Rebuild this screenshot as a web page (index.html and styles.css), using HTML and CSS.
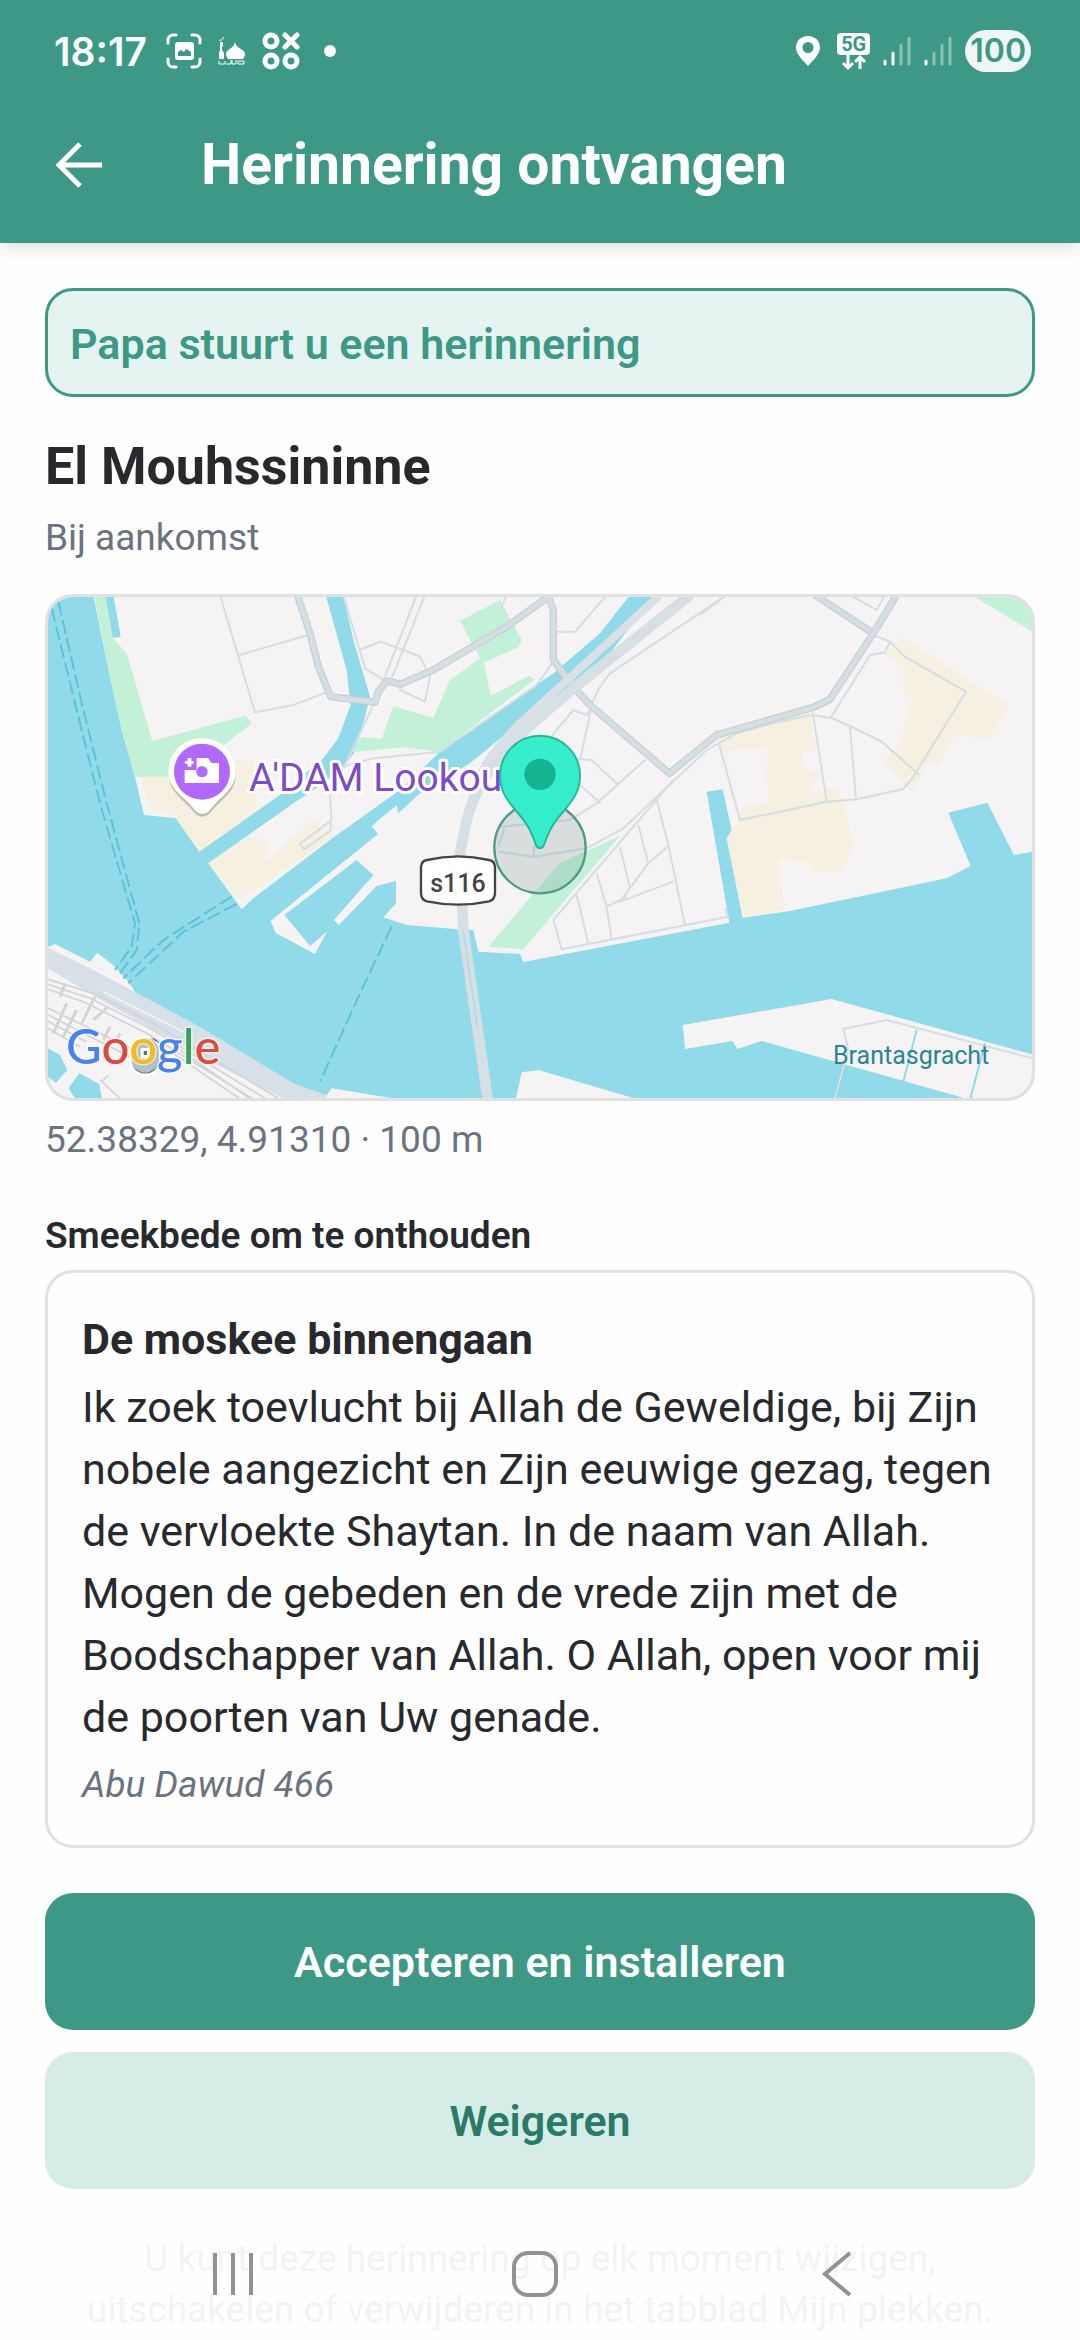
FILE: index.html
```
<!DOCTYPE html>
<html lang="nl">
<head>
  <meta charset="UTF-8" />
  <meta name="viewport" content="width=device-width, initial-scale=1.0"/>
  <title>Herinnering ontvangen</title>
  <link rel="stylesheet" href="styles.css">
</head>
<body>

<header class="app-header">
  <div class="status-bar">
    <div class="status-left">
      <span class="clock">18:17</span>
      <svg width="36" height="36" viewBox="0 0 36 36" aria-hidden="true">
        <path d="M2 10V7a5 5 0 0 1 5-5h3M26 2h3a5 5 0 0 1 5 5v3M34 26v3a5 5 0 0 1-5 5h-3M10 34H7a5 5 0 0 1-5-5v-3" fill="none" stroke="#fff" stroke-width="3" stroke-linecap="round"/>
        <rect x="9" y="9" width="19" height="18" rx="3" fill="#fff"/>
        <path d="M12 23v-4l3-2 3 2 2-3 2 1 3 2v4z" fill="#3d9985"/>
      </svg>
      <svg width="28" height="28" viewBox="0 0 28 28" aria-hidden="true">
        <path d="M8 17c0-5 8-5 9-12 1 7 10 7 10 12 0 2-1 3-2 5H10c-1-2-2-3-2-5zM2 5h3v4l-1 1v3l2 3v6H1v-6l1-3z" fill="#fff"/>
        <path d="M5 0c1 2-2 4-4 3" fill="none" stroke="#fff" stroke-width="1"/>
        <path d="M1 24v3h6v-3M8 27h5v-4M14 23v4h4v-4M20 27v-3h6v3z" fill="none" stroke="#fff" stroke-width="1"/>
      </svg>
      <svg width="38" height="40" viewBox="0 0 38 40" aria-hidden="true">
        <g fill="none" stroke="#fff" stroke-width="5" stroke-linecap="round">
          <circle cx="9" cy="10" r="6"/><circle cx="9" cy="30" r="6"/><circle cx="29" cy="30" r="6"/>
          <path d="M23 4l12 12M35 4L23 16"/>
        </g>
      </svg>
      <span class="more-dot"></span>
    </div>
    <div class="status-right">
      <svg width="24" height="32" viewBox="0 0 24 32" aria-hidden="true">
        <path fill-rule="evenodd" d="M12 1C5 1 0 6 0 12.500 0 20 8 26 12 31c4-5 12-11 12-18.500C24 6 19 1 12 1zm0 6a5 5 0 1 1 0 11 5 5 0 0 1 0-11z" fill="#fff"/>
      </svg>
      <span class="network">
        <span class="network-type">5G</span>
        <svg width="26" height="15" viewBox="0 0 26 15" aria-hidden="true">
          <path d="M7 0v13M2 8l5 5 5-5M19 14V2M14 7l5-5 5 5" fill="none" stroke="#fff" stroke-width="3"/>
        </svg>
      </span>
      <svg width="28" height="30" viewBox="0 0 28 30" aria-hidden="true">
        <g stroke="#fff" stroke-width="3" stroke-linecap="round">
          <path d="M2 25v3M10 17v11"/><path d="M18 9v19M26 2v26" opacity=".4"/>
        </g>
      </svg>
      <svg width="28" height="30" viewBox="0 0 28 30" aria-hidden="true">
        <g stroke="#fff" stroke-width="3" stroke-linecap="round">
          <path d="M2 25v3"/><path d="M10 17v11M18 9v19M26 2v26" opacity=".4"/>
        </g>
      </svg>
      <span class="battery">100</span>
    </div>
  </div>
  <div class="title-bar">
    <button class="back" type="button" aria-label="Terug">
      <svg width="46" height="46" viewBox="0 0 46 46" aria-hidden="true">
        <path d="M24 2L3 23l21 21M3 23h43" fill="none" stroke="#fff" stroke-width="5"/>
      </svg>
    </button>
    <h1>Herinnering ontvangen</h1>
  </div>
</header>

<main>
  <p class="banner">Papa stuurt u een herinnering</p>

  <h2 class="place">El Mouhssininne</h2>
  <p class="muted">Bij aankomst</p>

  <div class="map">
    <svg viewBox="0 0 984 501" preserveAspectRatio="xMidYMid slice" role="img" aria-label="Kaart">
      <g transform="translate(-8 -7) scale(.33333)">
        <rect width="3000" height="1560" fill="#90daea"/>

        <!-- land -->
        <g fill="#f5f3f4">
          <path d="M160 15L185 140 210 260 245 420 285 560 312 675 408 685 478 785 720 615 850 505 895 445 932 345 920 240 857 15z"/>
          <path d="M910 15L940 150 990 320 965 420 945 485 910 530 850 580 760 640 505 820 605 958 640 925 870 750 1080 600 1200 485 1540 250 1680 130 1770 15z"/>
          <path d="M1840 15L1790 85 1710 190 1610 280 1500 370 1400 430 1290 520 1140 610 1075 670 1070 645 995 708 1014 732 692 992 706 1028 825 1092 862 1024 810 1068 733 975 950 810 1000 856 882 990 896 1006 1010 888 1068 873 1068 940 1030 982 1100 1005 1245 1017 1300 1020 1315 1085 1440 1092 1450 1116 2068 998 2000 605 2048 598 2075 720 2060 745 2108 983 2250 963 2720 865 2792 828 2725 668 2842 638 2922 795 2990 783V15z"/>
          <path d="M1928 1305L2375 1227 2990 1397V1540L2775 1525 2165 1353 2092 1377 2077 1353 1935 1377z"/>
          <path d="M1425 1540L1445 1447 1495 1440 1800 1530z"/>
          <path d="M15 1075L45 1062 150 1115 172 1088 225 1130 265 1175 290 1212 475 1310 728 1470 725 1485 860 1515 875 1495 1090 1530 15 1540z"/>
        </g>
        <path d="M195 15L218 145 242 140 220 15z" fill="#90daea"/>
        <path d="M15 1370L60 1395 82 1440 48 1478 15 1455zM118 1450L178 1482 188 1540H115L85 1495z" fill="#90daea"/>

        <!-- built-up areas -->
        <g fill="#f5f0df">
          <path d="M285 562H390L560 505 640 515 650 660 478 785 408 685 325 650 310 565z"/>
          <path d="M505 820L620 740 690 755 670 820 820 690 880 740 630 910 605 930 575 915z"/>
          <path d="M2030 425L2310 340 2325 480 2285 485V530L2338 545 2305 605 2390 595 2420 670 2440 780 2400 845H2320L2300 815 2215 805 2232 960 2108 983 2062 745 2095 690 2100 652 2185 640 2180 470 2045 485z"/>
          <path d="M2585 140L2905 345 2850 445 2745 435 2695 525 2665 510 2615 605 2530 515 2580 465 2615 325 2590 300V230L2535 195z"/>
        </g>

        <!-- parks -->
        <g fill="#c3f1d8">
          <path d="M162 15H195L218 145 260 190 337 453 615 377 636 400 555 462 500 560H285L245 420 210 260z"/>
          <path d="M935 487L965 440 1025 447 1060 348 1180 384 1228 272 1320 205 1260 92 1380 30 1445 150 1435 172 1332 218 1352 318 1465 258 1485 268 1200 485 1090 472z"/>
          <path d="M1345 1070L1558 820 1740 738 1450 1078z"/>
          <path d="M2795 15L2985 130V15z"/>
        </g>

        <!-- small streets -->
        <g fill="none" stroke="#d5dfe3" stroke-width="6">
          <path d="M540 15L645 367 760 345 860 307M598 195L805 135M910 15L975 235 1035 272M962 178L1022 155 1140 200 1170 260 1155 335 1080 300 1085 270M1130 15L1035 260M1155 15L1055 265M1005 335L870 620 875 690 780 762 792 778 872 722V690M910 530L1000 505 1200 485 1490 285 1540 215M1400 15L1380 60M1700 15L1605 125H1550"/>
          <path d="M1440 560L1550 420 1600 360 1640 375 1655 350 1620 510M2060 15L1710 250 1680 290 1650 350M1815 510L1670 640 1590 690 1380 710M1600 505L1655 510 1735 585M1620 585L1682 640M1395 710L1375 770M1375 785L1480 800 1640 775 1750 715 2000 480 2090 430 2200 400 2310 375 2372 383 2430 408 2525 455 2638 555M1480 800L1490 720"/>
          <path d="M1850 630L1885 765 1935 1005M1795 705L1825 820 1740 935 1900 875M1740 770L1770 895M1825 820L1885 768M1670 850L1700 950 1715 1050M1700 950L1760 920M1610 915L1645 1060M1540 990L1565 1078 2065 980 2055 955M1540 990L1900 570"/>
          <path d="M2035 455L2100 690 2220 665 2360 635 2450 628 2590 597 2620 560 2778 305 2595 200 2550 155 2500 135M2318 365L2360 635M2430 408L2448 628M2372 383L2490 195 2535 187 2550 155M1980 75L2060 15M2430 15L2510 60 2535 15"/>
          <path d="M2380 1540L2425 1380 2410 1317 2540 1290 2990 1408"/>
        </g>
        <path d="M2630 1320L2590 1475M2835 1360L2790 1530" fill="none" stroke="#90daea" stroke-width="6"/>

        <!-- main roads -->
        <g fill="none" stroke-linejoin="round">
          <path d="M772 15L810 130 835 230 872 320 1005 337 1015 305 1040 272 1080 283 1180 240 1400 110 1525 20 1540 60V210L1600 290 1650 345 1888 550 2030 435 2320 352 2370 328 2500 130 2570 15M2325 15L2500 130" stroke="#c5d0d6" stroke-width="22"/>
          <path d="M772 15L810 130 835 230 872 320 1005 337 1015 305 1040 272 1080 283 1180 240 1400 110 1525 20 1540 60V210L1600 290 1650 345 1888 550 2030 435 2320 352 2370 328 2500 130 2570 15M2325 15L2500 130" stroke="#d5dfe3" stroke-width="15"/>
        </g>
        <path d="M1950 15L1600 295 1460 415C1370 495 1300 600 1278 700L1260 790 1270 1020 1345 1540" fill="none" stroke="#d6e0e4" stroke-width="32"/>
        <path d="M1860 15L1560 290 1440 400C1350 490 1330 530 1295 620" fill="none" stroke="#d9e1e6" stroke-width="24"/>
        <path d="M1270 1020L1312 1310" fill="none" stroke="#a9d7e2" stroke-width="4"/>

        <!-- railway -->
        <path d="M15 1070L150 1135 480 1310 760 1480 860 1515 860 1540H760L560 1440 200 1240 15 1130z" fill="#d6e0e6"/>
        <g fill="none" stroke="#d2d4d8" stroke-width="5">
          <path d="M15 1165L160 1210 340 1300 740 1540M15 1180L150 1225 330 1315 700 1540M15 1195L130 1235 320 1330 660 1540M15 1250L180 1330 300 1390M15 1270L160 1345 290 1410M15 1290L140 1355M15 1310L120 1370M400 1390L620 1540M420 1380L650 1540M180 1470L240 1525M185 1475L205 1455"/>
          <path d="M75 1180L60 1220M165 1220L125 1300M205 1250L160 1290M80 1240L40 1330M110 1260L70 1340M210 1310L190 1350M240 1330L225 1360" stroke-width="9"/>
          <path d="M190 1205L400 1310M230 1225L430 1325" stroke="#eef1f3" stroke-width="6"/>
        </g>

        <!-- ferry lines -->
        <g fill="none" stroke="#5dc3d9" stroke-width="6" stroke-dasharray="42 14">
          <path d="M35 55L110 360 180 640 285 1000 275 1070 225 1140M55 35L130 360 200 640 298 1000 290 1080 240 1150M575 920L370 1050 250 1165M590 942L430 1025 265 1180M1055 1010L960 1210 840 1475"/>
        </g>
      </g>

      <text class="map-place" x="201" y="194">A'DAM Lookou</text>
      <text class="map-water" x="785" y="467">Brantasgracht</text>

      <g transform="translate(-8 -7) scale(.33333)">
        <path d="M387 555a100 100 0 1 1 200 0c0 50-40 70-72 108-16 22-40 22-56 0-32-38-72-58-72-108z" fill="#444" opacity=".3"/>
        <path d="M385 545a101 101 0 1 1 202 0c0 50-40 70-72 108-16 25-40 25-56 0-32-38-74-58-74-108z" fill="#fff"/>
        <circle cx="486" cy="545" r="84" fill="#b069fb"/>
        <path d="M434 540H470V504H504L514 519H537V579H434zM443 504H454V513H461V521H454V530H443V521H435V513H443z" fill="#fff"/>
        <circle cx="486" cy="545" r="17" fill="#b069fb"/>

        <path d="M1143 830q2-18 18-20 93-22 186 0 16 2 18 20v82q-2 18-18 22-93 20-186 0-16-4-18-22z" fill="#fff" stroke="#444" stroke-width="7"/>

        <circle cx="1500" cy="773" r="137" fill="#5f8a82" fill-opacity=".2" stroke="#4c9c89" stroke-width="7"/>
        <path d="M1500 437c-66 0-120 54-120 120 0 60 36 88 70 132 20 26 30 52 38 76 5 12 19 12 24 0 8-24 18-50 38-76 34-44 70-72 70-132 0-66-54-120-120-120z" fill="#36edcc" stroke="#28b899" stroke-width="6"/>
        <circle cx="1500" cy="553" r="47" fill="#14b392"/>

        <rect x="268" y="1338" width="96" height="122" rx="44" fill="#fff"/>
        <rect x="275" y="1345" width="82" height="106" rx="38" fill="#b3bfc5"/>
        <path d="M280 1430q36 36 70 0-12 20-34 20t-36-20zM330 1342q20 4 30 20z" fill="#4c6472"/>
        <rect x="302" y="1374" width="28" height="30" fill="#fff"/>
        <rect x="311" y="1383" width="10" height="12" fill="#5c6f79"/>
      </g>

      <text class="map-road" x="410" y="295">s116</text>
      <text class="map-logo" x="18" y="467"><tspan class="g-blue">G</tspan><tspan class="g-red">o</tspan><tspan class="g-yellow">o</tspan><tspan class="g-blue">g</tspan><tspan class="g-green">l</tspan><tspan class="g-red">e</tspan></text>
    </svg>
  </div>
  <p class="muted">52.38329, 4.91310 · 100 m</p>

  <h3 class="section-title">Smeekbede om te onthouden</h3>
  <article class="card">
    <h4>De moskee binnengaan</h4>
    <p class="dua">Ik zoek toevlucht bij Allah de Geweldige, bij Zijn nobele aangezicht en Zijn eeuwige gezag, tegen de vervloekte Shaytan. In de naam van Allah. Mogen de gebeden en de vrede zijn met de Boodschapper van Allah. O Allah, open voor mij de poorten van Uw genade.</p>
    <p class="source">Abu Dawud 466</p>
  </article>

  <div class="actions">
    <button class="button primary" type="button">Accepteren en installeren</button>
    <button class="button secondary" type="button">Weigeren</button>
  </div>

  <p class="note">U kunt deze herinnering op elk moment wijzigen, uitschakelen of verwijderen in het tabblad Mijn plekken.</p>
</main>

<nav class="nav-bar">
  <button type="button" aria-label="Recente apps">
    <svg width="46" height="46" viewBox="0 0 46 46" aria-hidden="true">
      <path d="M5 2v42M23 2v42M41 2v42" fill="none" stroke="#929292" stroke-width="4"/>
    </svg>
  </button>
  <button type="button" aria-label="Startscherm">
    <svg width="46" height="46" viewBox="0 0 46 46" aria-hidden="true">
      <rect x="2" y="2" width="42" height="42" rx="14" fill="none" stroke="#929292" stroke-width="4"/>
    </svg>
  </button>
  <button type="button" aria-label="Vorige">
    <svg width="46" height="46" viewBox="0 0 46 46" aria-hidden="true">
      <path d="M36 2L11 23l25 21" fill="none" stroke="#929292" stroke-width="4"/>
    </svg>
  </button>
</nav>

</body>
</html>
```
FILE: styles.css
```
* {
  box-sizing: border-box;
}
body {
  font-family: Roboto, sans-serif;
  background: #fefefe;
  margin: 0;
  color: #27292d;
}
h1, h2, h3, h4, p {
  margin: 0;
}
svg {
  display: block;
}
button {
  font-family: inherit;
  border: none;
  background: none;
  padding: 0;
  cursor: pointer;
}

/* header */
.app-header {
  background: #3d9985;
  color: #fff;
  box-shadow: 0 2px 16px rgba(0,0,0,0.16);
}
.status-bar {
  display: flex;
  justify-content: space-between;
  align-items: center;
  height: 102px;
  padding: 0 49px 0 54px;
}
.status-left, .status-right {
  display: flex;
  align-items: center;
}
.status-left {
  gap: 16px;
}
.status-right {
  gap: 13px;
}
.clock {
  font-family: Inter, sans-serif;
  font-size: 39px;
  font-weight: 600;
  margin-right: 3px;
}
.more-dot {
  width: 12px;
  height: 12px;
  margin-left: 8px;
  border-radius: 50%;
  background: #fff;
}
.network {
  display: flex;
  flex-direction: column;
  align-items: center;
  margin-left: 4px;
}
.network-type {
  padding: 0 4px;
  border-radius: 4px;
  background: #fff;
  color: #3d9985;
  font-size: 20px;
  line-height: 22px;
  font-weight: 700;
}
.battery {
  padding: 0 5px;
  border-radius: 21px;
  background: #eef7f5;
  color: #3d9985;
  font-family: Inter, sans-serif;
  font-size: 32px;
  line-height: 42px;
  font-weight: 600;
}
.title-bar {
  display: flex;
  align-items: center;
  gap: 99px;
  height: 141px;
  padding: 0 56px 16px;
}
h1 {
  font-size: 57px;
  line-height: 72px;
  font-weight: 700;
}

/* content */
main {
  padding: 45px 45px 0;
}
.banner {
  padding: 28px 22px 24px;
  border: 3px solid #3d9985;
  border-radius: 28px;
  background: #e5f4f1;
  color: #3d9985;
  font-size: 43px;
  line-height: 51px;
  font-weight: 600;
}
.place {
  margin-top: 38px;
  font-size: 52px;
  line-height: 64px;
  font-weight: 700;
}
.muted {
  color: #6b7280;
  font-size: 37px;
  line-height: 50px;
  padding-top: 14px;
}
.map {
  margin-top: 31px;
  border: 3px solid #dfe2e1;
  border-radius: 28px;
  overflow: hidden;
}
.map svg {
  width: 100%;
}
.map-place {
  font-size: 39px;
  fill: #7c4acb;
  stroke: #fff;
  stroke-width: 6px;
  stroke-linejoin: round;
  paint-order: stroke;
}
.map-water {
  font-size: 25px;
  fill: #2b8592;
}
.map-road {
  font-size: 25px;
  font-weight: 500;
  fill: #444;
  text-anchor: middle;
}
.map-logo {
  font-family: Lato, sans-serif;
  font-size: 49px;
  font-weight: 500;
  stroke: #fff;
  stroke-width: 3px;
  stroke-opacity: 0.6;
  paint-order: stroke;
}
.g-blue { fill: #4783ea; }
.g-red { fill: #dd4a3e; }
.g-yellow { fill: #f3bb1b; }
.g-green { fill: #3ba457; }

.section-title {
  margin-top: 46px;
  font-size: 37px;
  line-height: 50px;
  font-weight: 600;
}
.card {
  margin-top: 9px;
  padding: 35px 34px;
  border: 3px solid #dfe2e1;
  border-radius: 28px;
}
.card h4 {
  font-size: 43px;
  line-height: 62px;
  font-weight: 700;
}
.dua {
  margin-top: 6px;
  font-size: 43px;
  line-height: 62px;
}
.source {
  padding-top: 12px;
  color: #6b7280;
  font-size: 37px;
  line-height: 50px;
  font-style: italic;
}
.actions {
  display: flex;
  flex-direction: column;
  gap: 22px;
  margin-top: 45px;
}
.button {
  padding: 43px 42px 41px;
  border-radius: 28px;
  font-size: 43px;
  line-height: 53px;
  font-weight: 600;
}
.primary {
  background: #3d9985;
  color: #fff;
}
.secondary {
  background: #d5ede6;
  color: #2a7a68;
}
.note {
  margin-top: 44px;
  color: #6b7280;
  font-size: 37px;
  line-height: 51px;
  text-align: center;
}

/* system navigation, lies over the end of the page */
.nav-bar {
  position: fixed;
  left: 0;
  right: 0;
  bottom: 0;
  display: flex;
  justify-content: center;
  gap: 256px;
  padding: 45px 10px 43px 0;
  background: rgba(254,254,254,0.92);
}
```
